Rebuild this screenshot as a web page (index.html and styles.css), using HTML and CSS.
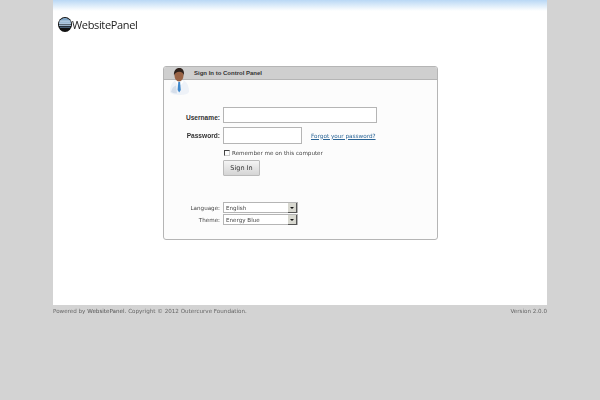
FILE: index.html
```html
<!DOCTYPE html>
<html lang="en">
<head>
    <meta charset="UTF-8">
    <title>WebsitePanel</title>
    <link rel="stylesheet" href="styles.css">
</head>
<body>
    <div class="page">
        <div class="content">
            <div class="logo">
                <svg class="logo-icon" width="14" height="15" viewBox="0 0 14 15">
                    <ellipse cx="7" cy="7.500" rx="7" ry="7.500" fill="#111"/>
                    <path d="M1 7C1 3.500 3.700 1 7 1s6 2.500 6 6z" fill="#7ea3c4"/>
                    <rect x="1.500" y="3.600" width="11" height="1" fill="#cfe0ee"/>
                    <rect x="1" y="5.600" width="12" height="1" fill="#cfe0ee"/>
                    <rect x="1" y="7.500" width="12" height="1.400" fill="#a9c4dc"/>
                    <rect x="1.800" y="9.700" width="10.400" height="1" fill="#5f7f9e"/>
                </svg>
                <span class="logo-text">WebsitePanel</span>
            </div>
            <div class="login-box">
                <div class="login-title">Sign In to Control Panel</div>
                <svg class="avatar" width="19" height="27" viewBox="0 0 19 27">
                    <path d="M0 24c0-6 2-10 6-12h7c4 2 6 6 6 12-1 2-4 3-9 3s-9-1-10-3z" fill="#eef2f8"/>
                    <path d="M1 24c2 1 4 1.500 6 1.500l-1-8c-3 1-4 3-5 6.500z" fill="#d5deea"/>
                    <path d="M6 12l2.500 2h2l2.500-2 .5 2-2.500 3h-3L5.500 14z" fill="#fff"/>
                    <path d="M8.300 14h1.800l.7 8-1.600 2.500-1.600-2.500z" fill="#3d87cc"/>
                    <ellipse cx="9" cy="7.500" rx="4.500" ry="6" fill="#9a6446"/>
                    <path d="M4 7.500C3.500 2.500 6 0 9.300 0s5.200 2.500 4.700 7.500c-.8-2.500-2-3.700-4.700-3.700S5 5 4 7.500z" fill="#2f221c"/>
                </svg>
                <form class="login-form">
                    <label class="field-label">Username:</label>
                    <input class="text-input wide" type="text">
                    <label class="field-label">Password:</label>
                    <div class="password-row">
                        <input class="text-input" type="password">
                        <a class="forgot" href="#">Forgot your password?</a>
                    </div>
                    <div class="remember">
                        <span class="check"></span>
                        <span>Remember me on this computer</span>
                    </div>
                    <button class="sign-in" type="button">Sign In</button>
                    <label class="small-label first">Language:</label>
                    <div class="select first">English<span class="arrow"></span></div>
                    <label class="small-label">Theme:</label>
                    <div class="select">Energy Blue<span class="arrow"></span></div>
                </form>
            </div>
        </div>
        <div class="footer">
            <span>Powered by <a href="#">WebsitePanel</a>. Copyright © 2012 Outercurve Foundation.</span>
            <span>Version 2.0.0</span>
        </div>
    </div>
</body>
</html>
```

FILE: styles.css
```css
body {
    margin: 0;
    background: #d3d3d3;
    font-family: "DejaVu Sans", Verdana, sans-serif;
    font-size: 5.600px;
    color: #444;
}

.page {
    width: 494px;
    margin: 0 0 0 53px;
    will-change: opacity;
}

.content {
    height: 305px;
    padding-top: 17px;
    box-sizing: border-box;
    background: linear-gradient(to bottom, #b9d8f5 0, #e6f1fb 7px, #fff 11px);
}

.logo {
    display: flex;
    align-items: center;
    height: 15px;
    padding-left: 5px;
}

.logo-text {
    margin-top: -1px;
    font-family: "Open Sans", sans-serif;
    font-size: 11px;
    letter-spacing: -0.35px;
    color: #222;
}

.login-box {
    position: relative;
    width: 273px;
    height: 172px;
    margin: 34px 0 0 110px;
    border: 1px solid #b5b5b5;
    border-radius: 3px;
    background: #fcfcfc;
}

.login-title {
    height: 12px;
    padding-left: 30px;
    border-bottom: 1px solid #b5b5b5;
    border-radius: 2px 2px 0 0;
    background: #cfcfcf;
    font-family: "Liberation Sans", Arial, sans-serif;
    font-size: 6px;
    font-weight: bold;
    line-height: 13px;
    color: #333;
}

.avatar {
    position: absolute;
    left: 6px;
    top: 1px;
}

.login-form {
    display: grid;
    grid-template-columns: 56px 1fr;
    column-gap: 3px;
    align-items: center;
    margin-top: 27px;
}

.field-label {
    font-family: "Liberation Sans", Arial, sans-serif;
    font-size: 6.600px;
    font-weight: bold;
    text-align: right;
    color: #333;
}

.text-input {
    box-sizing: border-box;
    display: block;
    width: 79px;
    height: 17px;
    padding: 0;
    border: 1px solid #b5b5b5;
    background: #fff;
}

.wide {
    width: 154px;
    height: 16px;
    margin-bottom: 4px;
}

.password-row {
    display: flex;
    align-items: center;
}

.forgot {
    margin-left: 9px;
    color: #2a6496;
    font-size: 5.700px;
}

.remember {
    grid-column: 2;
    display: flex;
    align-items: center;
    height: 9px;
    margin-top: 4px;
}

.check {
    box-sizing: border-box;
    width: 6px;
    height: 6px;
    margin: 0 2px 0 1px;
    border: 1px solid #444;
    border-right-color: #ccc;
    border-bottom-color: #ccc;
}

.sign-in {
    grid-column: 2;
    box-sizing: border-box;
    width: 37px;
    height: 16px;
    margin-top: 3px;
    padding: 0;
    border: 1px solid #bbb;
    border-radius: 1px;
    background: linear-gradient(to bottom, #f4f4f4, #d5d5d5);
    font-family: "DejaVu Sans", Verdana, sans-serif;
    font-size: 6.500px;
    color: #333;
}

.small-label {
    text-align: right;
}

.select {
    box-sizing: border-box;
    display: flex;
    justify-content: space-between;
    align-items: center;
    width: 75px;
    height: 11px;
    margin-bottom: 1px;
    padding-left: 2px;
    border: 1px solid #b5b5b5;
    background: #fff;
}

.first {
    margin-top: 26px;
}

.arrow {
    position: relative;
    width: 8px;
    height: 9px;
    background: #d8d8d0;
    border-right: 1px solid #555;
    border-bottom: 1px solid #555;
}

.arrow::after {
    content: "";
    position: absolute;
    left: 2px;
    top: 4px;
    border-left: 2px solid transparent;
    border-right: 2px solid transparent;
    border-top: 2px solid #111;
}

.footer {
    display: flex;
    justify-content: space-between;
    padding-top: 3px;
    color: #666;
}

.footer a {
    color: #555;
}
```
